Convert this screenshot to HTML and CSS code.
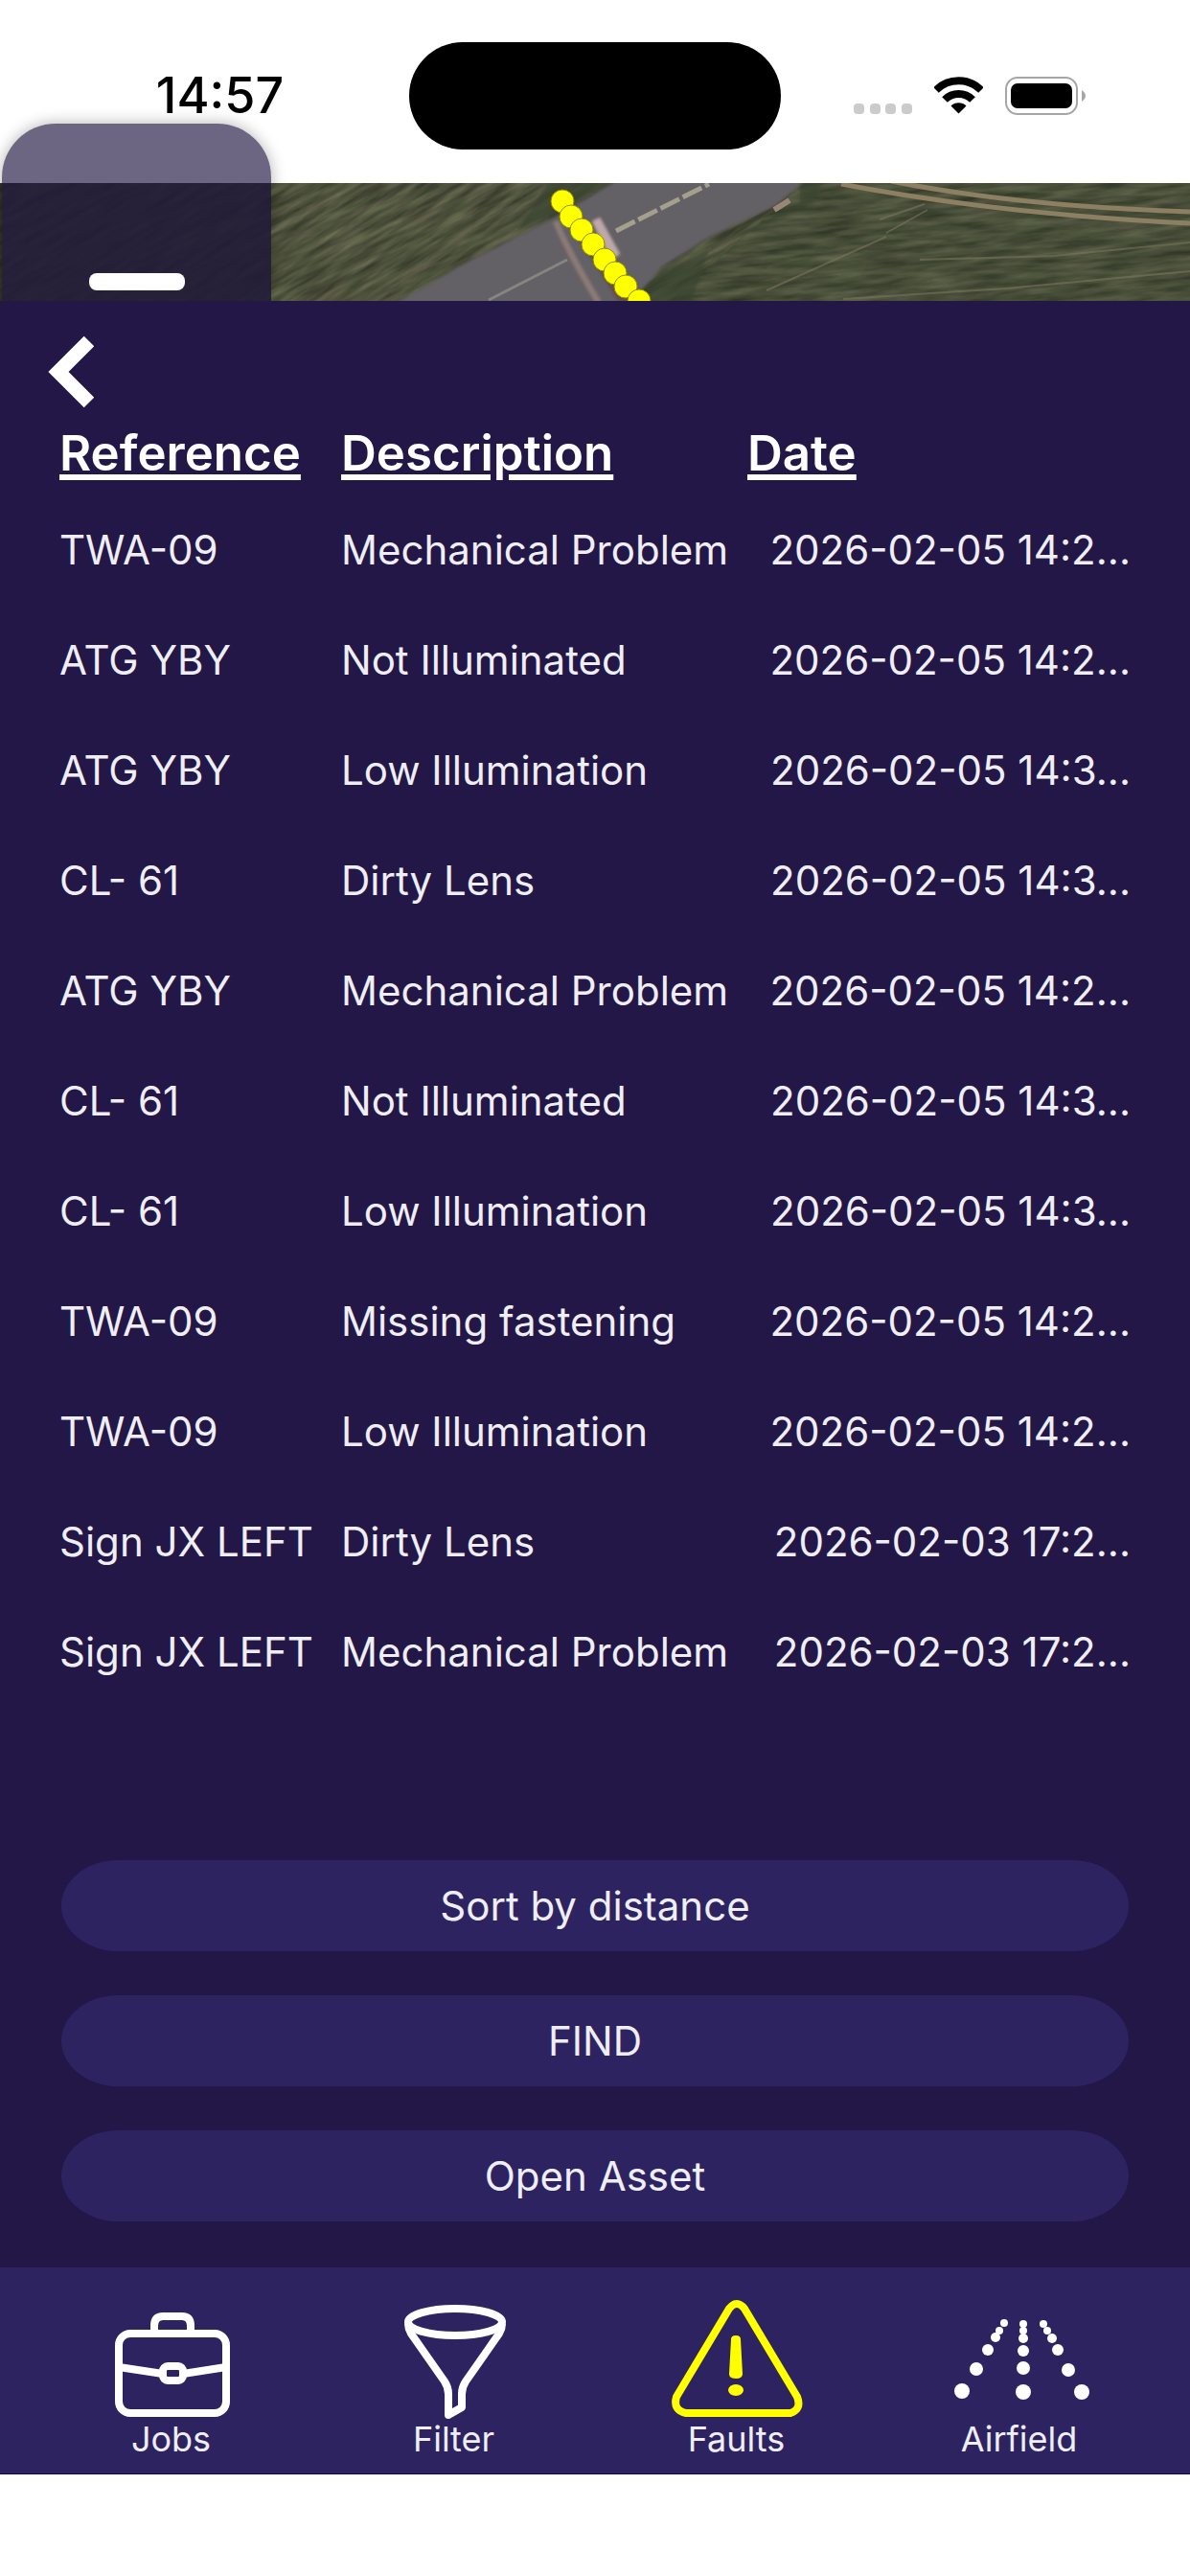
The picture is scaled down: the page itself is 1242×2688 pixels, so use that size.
FILE: index.html
```html
<!DOCTYPE html>
<html lang="en">
<head>
    <meta charset="UTF-8">
    <meta name="viewport" content="width=device-width, initial-scale=1.0">
    <title>Faults</title>
    <link rel="stylesheet" href="styles.css">
</head>

<body>
    <div id="status">
        <div class="time">14:57</div>
        <div class="island"></div>
        <div class="signals">
            <svg class="dots" width="61" height="40" viewBox="0 0 61 40">
                <rect x="0" y="28" width="11" height="11" rx="4"/>
                <rect x="17" y="28" width="11" height="11" rx="4"/>
                <rect x="33" y="28" width="11" height="11" rx="4"/>
                <rect x="50" y="28" width="11" height="11" rx="4"/>
            </svg>
            <svg class="wifi" width="51" height="40" viewBox="0 0 51 40">
                <path class="arc" d="M2 14 A33.5 33.5 0 0 1 49 14"/>
                <path class="arc" d="M11 24 A20.5 20.5 0 0 1 40 24"/>
                <path d="M25.500 38.500 L17.500 30.500 A11.500 11.500 0 0 1 33.500 30.500 Z"/>
            </svg>
            <svg class="battery" width="85" height="40" viewBox="0 0 85 40">
                <rect class="case" x="1" y="1" width="74" height="38" rx="12"/>
                <rect x="6" y="7" width="64" height="26" rx="7"/>
                <path class="cap" d="M80 14 Q88 20 80 26 Z"/>
            </svg>
        </div>
    </div>

    <div id="map">
        <svg class="aerial" viewBox="0 0 1242 123" preserveAspectRatio="xMidYMid slice">
            <defs>
                <filter id="grass" x="0" y="0" width="100%" height="100%" color-interpolation-filters="sRGB">
                    <feTurbulence type="fractalNoise" baseFrequency="0.02 0.15" numOctaves="4" seed="7"/>
                    <feColorMatrix values="0.32 0 0 0 0.15  0.3 0.05 0 0 0.15  0.24 0 0 0 0.12  0 0 0 0 1"/>
                </filter>
                <filter id="soft"><feGaussianBlur stdDeviation="1.5"/></filter>
                <clipPath id="east"><path d="M840 0 H1242 V123 H700 Z"/></clipPath>
            </defs>
            <!-- fields -->
            <g transform="rotate(-30 450 60)">
                <rect x="-100" y="-400" width="1100" height="900" filter="url(#grass)"/>
            </g>
            <g clip-path="url(#east)">
                <g transform="rotate(-6 950 60)">
                    <rect x="650" y="-60" width="640" height="260" filter="url(#grass)"/>
                </g>
                <rect x="650" width="592" height="123" fill="#2f3a2a" opacity="0.2"/>
            </g>
            <rect class="west" width="283" height="123"/>
            <!-- runway -->
            <g filter="url(#soft)">
                <path d="M540 50 L575 -5 H650 Z M690 92 L650 128 L720 128 L740 70 L835 20 V-5 H860 L850 20 Z" fill="#37422f" opacity="0.7"/>
                <path d="M408 128 L500 76 L580 36 L648 -5 H842 L808 24 L740 56 L690 88 L655 128 Z" fill="#636066"/>
                <path d="M580 40 Q592 70 625 125" stroke="#8c7b76" stroke-width="6" fill="none"/>
                <path d="M618 40 L626 36 L647 74 L638 80 Z" fill="#bda8aa"/>
                <path d="M590 25 L655 128" stroke="#64504c" stroke-width="12"/>
            </g>
            <path d="M643 50 L740 1" stroke="#a5a08c" stroke-width="5" stroke-dasharray="22 4" fill="none"/>
            <path d="M510 122 L592 80" stroke="#88857f" stroke-width="3"/>
            <path d="M808 28 L824 18" stroke="#9b8577" stroke-width="6"/>
            <!-- dirt track -->
            <g fill="none" stroke="#8d7f62" stroke-width="5">
                <path d="M878 1 Q1040 32 1242 42"/>
                <path d="M930 -2 Q1060 24 1242 30"/>
            </g>
            <g fill="none" stroke="#7d755e" stroke-width="2" opacity="0.6">
                <path d="M918 38 L965 22"/>
                <path d="M925 52 L968 28"/>
                <path d="M800 112 L925 56"/>
                <path d="M960 80 L1100 76 L1242 62"/>
                <path d="M880 121 L1050 110 L1242 92"/>
            </g>
            <g class="lights">
                <circle cx="587" cy="19" r="12"/>
                <circle cx="596" cy="35" r="12"/>
                <circle cx="607" cy="49" r="12"/>
                <circle cx="619" cy="64" r="12"/>
                <circle cx="631" cy="80" r="12"/>
                <circle cx="642" cy="94" r="12"/>
                <circle cx="653" cy="108" r="12"/>
                <circle cx="667" cy="123" r="12"/>
            </g>
        </svg>
        <button class="toggle" aria-label="Collapse menu"><span></span></button>
    </div>

    <div id="panel">
        <button class="back" aria-label="Back">
            <svg width="48" height="76" viewBox="0 0 48 76"><path d="M43 6 L11 38 L43 70"/></svg>
        </button>

        <table id="faults">
            <thead>
                <tr><th class="ref">Reference</th><th class="desc">Description</th><th>Date</th></tr>
            </thead>
            <tbody>
                <tr><td>TWA-09</td><td>Mechanical Problem</td><td class="date">2026-02-05 14:2...</td></tr>
                <tr><td>ATG YBY</td><td>Not Illuminated</td><td class="date">2026-02-05 14:2...</td></tr>
                <tr><td>ATG YBY</td><td>Low Illumination</td><td class="date">2026-02-05 14:3...</td></tr>
                <tr><td>CL- 61</td><td>Dirty Lens</td><td class="date">2026-02-05 14:3...</td></tr>
                <tr><td>ATG YBY</td><td>Mechanical Problem</td><td class="date">2026-02-05 14:2...</td></tr>
                <tr><td>CL- 61</td><td>Not Illuminated</td><td class="date">2026-02-05 14:3...</td></tr>
                <tr><td>CL- 61</td><td>Low Illumination</td><td class="date">2026-02-05 14:3...</td></tr>
                <tr><td>TWA-09</td><td>Missing fastening</td><td class="date">2026-02-05 14:2...</td></tr>
                <tr><td>TWA-09</td><td>Low Illumination</td><td class="date">2026-02-05 14:2...</td></tr>
                <tr><td>Sign JX LEFT</td><td>Dirty Lens</td><td class="date">2026-02-03 17:2...</td></tr>
                <tr><td>Sign JX LEFT</td><td>Mechanical Problem</td><td class="date">2026-02-03 17:2...</td></tr>
            </tbody>
        </table>

        <div id="actions">
            <button>Sort by distance</button>
            <button>FIND</button>
            <button>Open Asset</button>
        </div>
    </div>

    <nav id="tabs">
        <a href="#jobs">
            <svg width="160" height="130" viewBox="0 0 160 130">
                <rect x="25" y="39" width="112" height="83" rx="12"/>
                <path d="M62 38 V31 Q62 21 71 21 H91 Q100 21 100 31 V38"/>
                <rect x="71" y="73" width="21" height="15" rx="5"/>
                <path d="M25 74 L71 81 M92 81 L137 74"/>
            </svg>
            Jobs
        </a>
        <a href="#filter">
            <svg width="160" height="130" viewBox="0 0 160 130">
                <ellipse cx="81" cy="27" rx="49" ry="14"/>
                <path d="M32 29 Q32 34 35 39 L70 89 Q74 95 74 102 V124 L88 116 V102 Q88 95 92 89 L127 39 Q130 34 130 29"/>
            </svg>
            Filter
        </a>
        <a href="#faults" class="active">
            <svg width="160" height="130" viewBox="0 0 160 130">
                <path d="M72 13 Q80 3 88 13 L143 105 Q148 118 136 122 H27 Q13 119 17 105 Z"/>
                <path class="solid" d="M74 45 Q74 41 79 41 Q84 41 84 45 L86 81 Q86 86 79 86 Q72 86 72 81 Z"/>
                <ellipse class="solid" cx="79" cy="98" rx="8" ry="6"/>
            </svg>
            Faults
        </a>
        <a href="#airfield">
            <svg class="runway" width="160" height="130" viewBox="0 0 160 130">
                <circle cx="64" cy="28" r="4"/>
                <circle cx="59" cy="36" r="4"/>
                <circle cx="55" cy="43" r="5"/>
                <circle cx="47" cy="56" r="6"/>
                <circle cx="35" cy="76" r="7"/>
                <circle cx="20" cy="99" r="8"/>
                <circle cx="84" cy="29" r="4"/>
                <circle cx="84" cy="36" r="4"/>
                <circle cx="84" cy="44" r="5"/>
                <circle cx="84" cy="57" r="6"/>
                <circle cx="84" cy="75" r="7"/>
                <circle cx="84" cy="100" r="8"/>
                <circle cx="105" cy="29" r="4"/>
                <circle cx="109" cy="36" r="4"/>
                <circle cx="114" cy="44" r="5"/>
                <circle cx="120" cy="56" r="6"/>
                <circle cx="131" cy="77" r="7"/>
                <circle cx="145" cy="100" r="8"/>
            </svg>
            Airfield
        </a>
    </nav>
</body>
</html>
```

FILE: styles.css
```css
* {
    box-sizing: border-box;
}

body {
    margin: 0;
    background-color: white;
    font-family: Inter, "Liberation Sans", sans-serif;
    font-size: 42px;
    color: #efeef4;
}

button {
    border: none;
    padding: 0;
    font: inherit;
    color: inherit;
    cursor: pointer;
}

/* status bar */
#status {
    height: 191px;
    padding-top: 8px;
    display: grid;
    grid-template-columns: 1fr 388px 1fr;
    align-items: center;
    color: black;
}

.time {
    padding-left: 32px;
    font-size: 52px;
    font-weight: 500;
    text-align: center;
}

.island {
    height: 112px;
    border-radius: 56px;
    background-color: black;
}

.signals {
    display: flex;
    gap: 23px;
    padding-left: 76px;
}

.dots {
    fill: #cbcbcb;
}

.wifi .arc {
    fill: none;
    stroke: black;
    stroke-width: 8;
}

.battery .case {
    fill: none;
    stroke: #a6a6a6;
    stroke-width: 2;
}

.battery .cap {
    fill: #a6a6a6;
}

/* map strip */
#map {
    position: relative;
    height: 123px;
}

.aerial {
    display: block;
    width: 100%;
    height: 100%;
}

.west {
    fill: #1c2018;
    opacity: 0.6;
}

.lights {
    fill: #ffff00;
    stroke: #8f8f00;
    stroke-width: 1;
}

/* the menu handle hangs over the map and the status bar */
.toggle {
    position: absolute;
    left: 2px;
    bottom: 0;
    width: 281px;
    height: 185px;
    padding-top: 144px;
    background-color: rgba(34, 23, 66, 0.66);
    border-radius: 56px 56px 0 0;
    box-shadow: 0 0 16px rgba(0, 0, 0, 0.3);
    clip-path: inset(-30px -30px 0 -30px);
}

.toggle span {
    display: block;
    width: 100px;
    height: 18px;
    margin: 0 auto;
    border-radius: 8px;
    background-color: white;
}

/* faults panel */
#panel {
    padding: 36px 62px 48px;
    background-color: #221747;
}

.back {
    display: block;
    margin: 0 0 8px -12px;
    background: none;
}

.back svg {
    display: block;
    fill: none;
    stroke: white;
    stroke-width: 15;
}

#faults {
    width: 100%;
    table-layout: fixed;
    border-collapse: collapse;
}

th,
td {
    padding: 0;
    white-space: nowrap;
}

th {
    padding-bottom: 4px;
    color: white;
    font-size: 51px;
    font-weight: 600;
    line-height: 78px;
    text-align: left;
    text-decoration: underline;
    text-decoration-thickness: 6px;
    text-underline-offset: 4px;
}

td {
    height: 115px;
}

.ref {
    width: 294px;
}

.desc {
    width: 424px;
}

.date {
    text-align: right;
}

#actions {
    display: grid;
    gap: 46px;
    margin: 160px 2px 0;
}

#actions button {
    height: 95px;
    border-radius: 60px / 48px;
    background-color: #2d2361;
}

/* bottom tabs */
#tabs {
    display: grid;
    grid-template-columns: repeat(4, 1fr);
    padding: 30px 31px 17px;
    background-color: #2d2361;
    border-bottom: 1px solid #12073f;
}

#tabs a {
    display: flex;
    flex-direction: column;
    align-items: center;
    color: inherit;
    font-size: 36px;
    line-height: 38px;
    text-decoration: none;
}

#tabs svg {
    fill: none;
    stroke: white;
    stroke-width: 8;
    stroke-linejoin: round;
}

#tabs .active svg {
    stroke: #ffff00;
}

#tabs .solid {
    fill: #ffff00;
    stroke: none;
}

#tabs .runway {
    fill: white;
    stroke: none;
}
```
